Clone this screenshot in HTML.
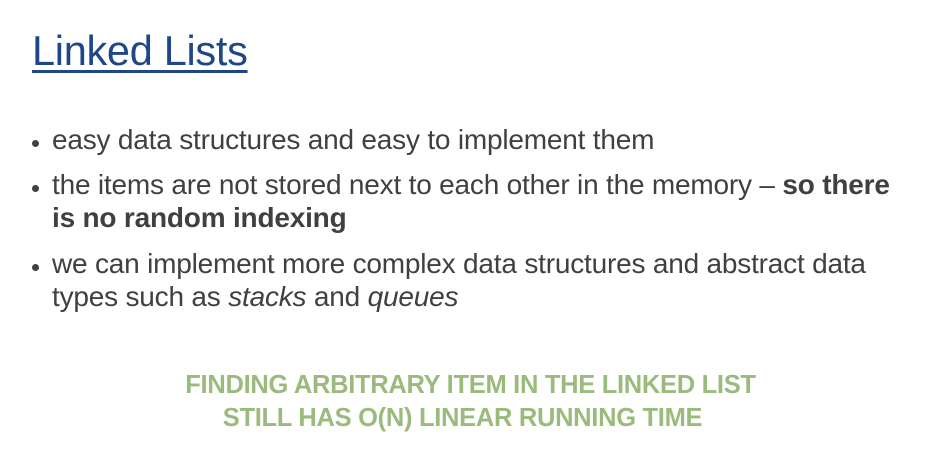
<!DOCTYPE html>
<html><head><style>
body{margin:0;width:943px;height:467px;background:#fff;overflow:hidden;position:relative;font-family:"Liberation Sans",sans-serif;}
.t{position:absolute;white-space:nowrap;}
#title{left:32px;top:27px;font-size:41.5px;color:#1f4788;text-decoration:underline;text-decoration-thickness:3px;text-underline-offset:5px;letter-spacing:-0.3px}
.b{font-size:28px;color:#404040;left:52px;letter-spacing:-0.2px}
.dot{position:absolute;left:32px;width:7px;height:7px;border-radius:50%;background:#404040}
.g{font-size:25.5px;font-weight:bold;color:#9bbb7d;left:0;width:943px;text-align:center;letter-spacing:-0.3px}
</style></head><body>
<div class="t" id="title">Linked Lists</div>
<div class="dot" style="top:140px"></div>
<div class="t b" style="top:124px">easy data structures and easy to implement them</div>
<div class="dot" style="top:185px"></div>
<div class="t b" style="top:169px">the items are not stored next to each other in the memory – <b>so there</b></div>
<div class="t b" style="top:202px"><b>is no random indexing</b></div>
<div class="dot" style="top:264px"></div>
<div class="t b" style="top:248px">we can implement more complex data structures and abstract data</div>
<div class="t b" style="top:281px">types such as <i>stacks</i> and <i>queues</i></div>
<div class="t g" style="top:371px;left:-1px">FINDING ARBITRARY ITEM IN THE LINKED LIST</div>
<div class="t g" style="top:404px;left:-9px">STILL HAS O(N) LINEAR RUNNING TIME</div>
</body></html>
